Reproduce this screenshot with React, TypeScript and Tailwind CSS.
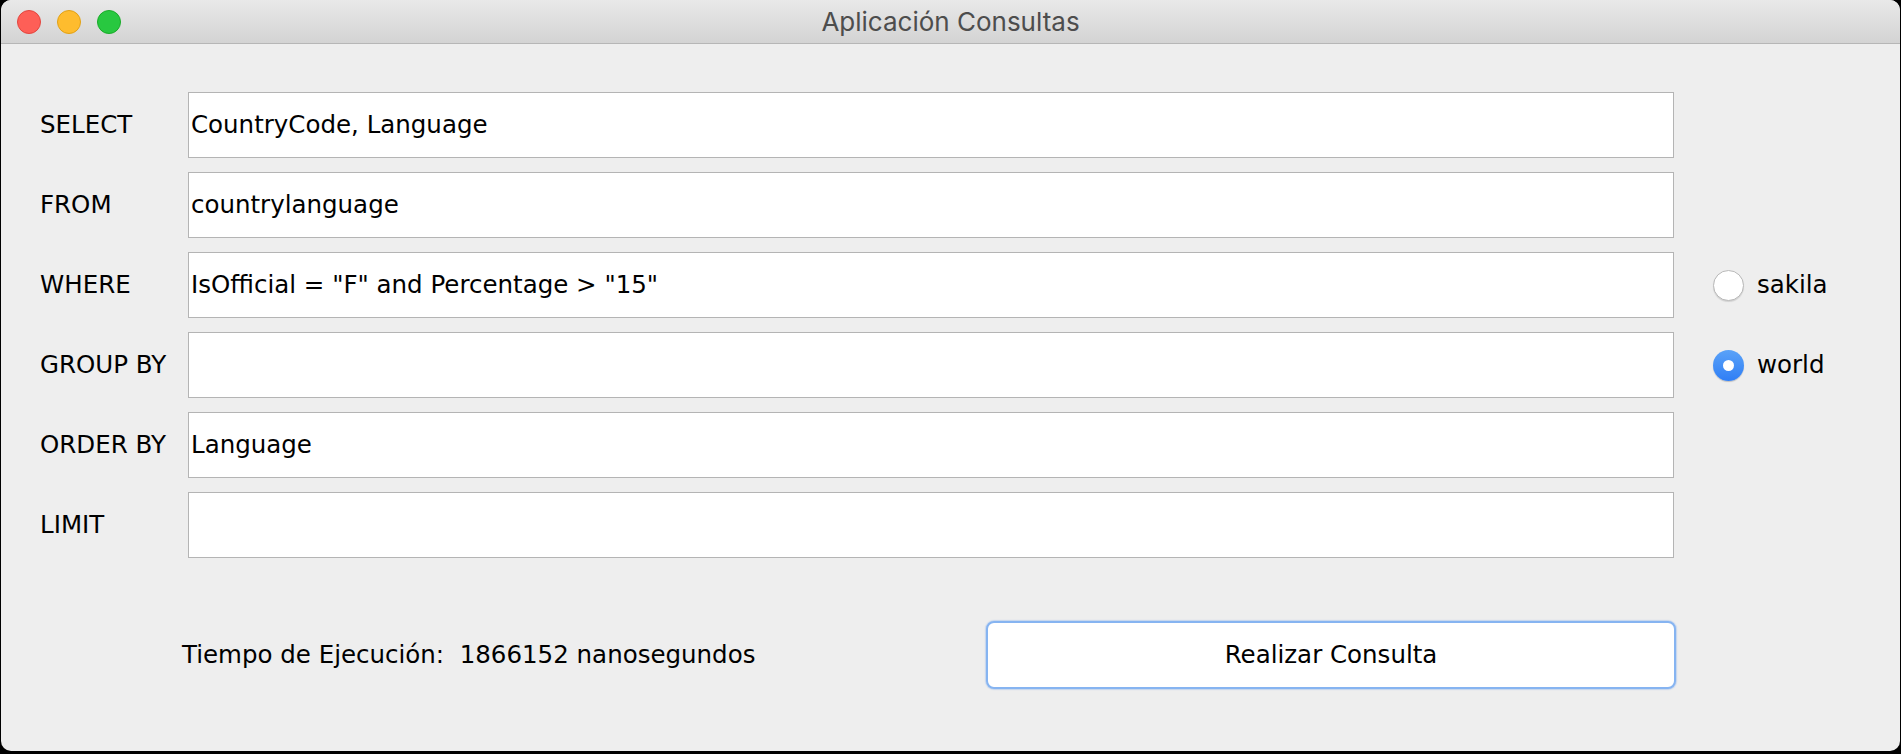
import React from "react";

const rows = [
  { label: "SELECT", value: "CountryCode, Language" },
  { label: "FROM", value: "countrylanguage" },
  { label: "WHERE", value: 'IsOfficial = "F" and Percentage > "15"' },
  { label: "GROUP BY", value: "" },
  { label: "ORDER BY", value: "Language" },
  { label: "LIMIT", value: "" },
];

const uiFont = { fontFamily: '"DejaVu Sans", "Open Sans", sans-serif' };

function Radio({ checked, label }: { checked: boolean; label: string }) {
  return (
    <div className="flex items-center gap-[13px]">
      {checked ? (
        <span className="w-[31px] h-[31px] rounded-full bg-gradient-to-b from-[#5aa2f8] to-[#2f7ef5] flex items-center justify-center shadow-[0_1px_1px_rgba(0,0,0,0.2)]">
          <span className="w-[11px] h-[11px] rounded-full bg-white" />
        </span>
      ) : (
        <span className="w-[31px] h-[31px] rounded-full bg-white border border-[#b9b9b9] shadow-[0_1px_1px_rgba(0,0,0,0.12)]" />
      )}
      <span className="text-[24.5px] text-black leading-none">{label}</span>
    </div>
  );
}

export default function App() {
  return (
    <div className="w-[1901px] h-[754px] bg-black pl-px overflow-hidden">
      <div className="w-[1899px] h-[751px] rounded-[10px] overflow-hidden bg-[#eeeeee] flex flex-col" style={uiFont}>
        <div className="h-[44px] shrink-0 bg-gradient-to-b from-[#e9e9e9] to-[#d3d3d3] border-b border-[#b6b6b6] flex items-center relative">
          <div className="flex items-center gap-[16px] pl-[16px]">
            <span className="w-[24px] h-[24px] rounded-full bg-[#fe5f57] border border-[#e2463f]" />
            <span className="w-[24px] h-[24px] rounded-full bg-[#febc2e] border border-[#e1a116]" />
            <span className="w-[24px] h-[24px] rounded-full bg-[#28c840] border border-[#1aab29]" />
          </div>
          <div
            className="absolute inset-0 flex items-center justify-center text-[26px] text-[#4d4d4d]"
            style={{ fontFamily: 'Inter, "Liberation Sans", sans-serif' }}
          >
            Aplicación Consultas
          </div>
        </div>

        <div className="pt-[48px] pl-[39px]">
          <div className="grid grid-cols-[148px_1486px_1fr] gap-y-[14px]">
            {rows.map((r, i) => (
              <React.Fragment key={r.label}>
                <div className="h-[66px] flex items-center text-[24.5px] text-black">{r.label}</div>
                <div className="h-[66px] bg-white border border-[#b4b4b4] flex items-center pl-[2px] text-[24.5px] text-black whitespace-nowrap">
                  {r.value}
                </div>
                <div className="h-[66px] flex items-center pl-[39px]">
                  {i === 2 && <Radio checked={false} label="sakila" />}
                  {i === 3 && <Radio checked={true} label="world" />}
                </div>
              </React.Fragment>
            ))}
          </div>
        </div>

        <div className="mt-[63px] flex items-center">
          <div className="w-[985px] pl-[181px] text-[24.5px] text-black whitespace-pre">
            {"Tiempo de Ejecución:  1866152 nanosegundos"}
          </div>
          <button
            type="button"
            className="w-[690px] h-[68px] bg-white rounded-[8px] border-2 border-[#86b4f1] shadow-[0_0_1px_1px_rgba(120,170,240,0.35)] text-[24.5px] text-black"
            style={uiFont}
          >
            Realizar Consulta
          </button>
        </div>
      </div>
    </div>
  );
}
